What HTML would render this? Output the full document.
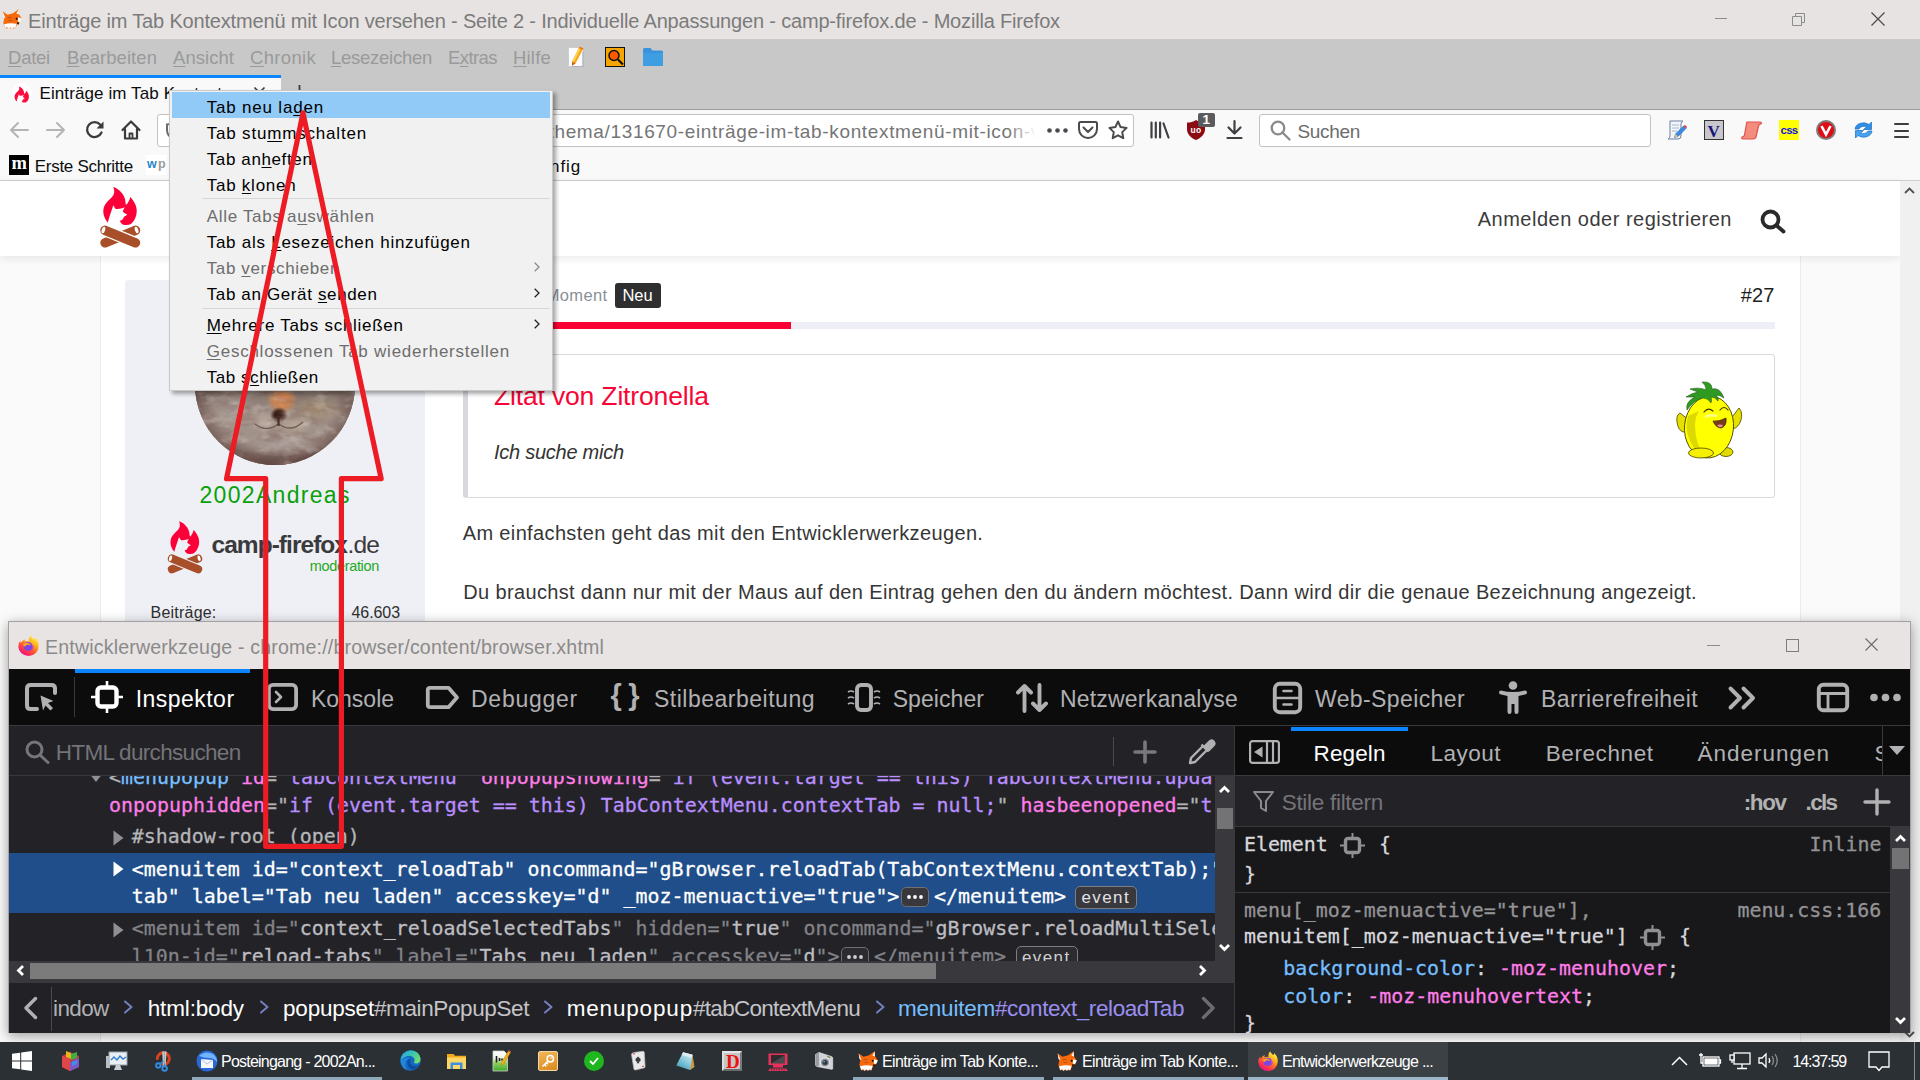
<!DOCTYPE html><html lang="de"><head><meta charset="utf-8"><title>Einträge im Tab Kontextmenü mit Icon versehen - Seite 2 - Individuelle Anpassungen - camp-firefox.de - Mozilla Firefox</title><style>
*{box-sizing:border-box;margin:0;padding:0}
html,body{width:1920px;height:1080px;overflow:hidden;background:#fafafa;font-family:"Liberation Sans",sans-serif}
.t{position:absolute;white-space:pre;display:block}
.a{position:absolute}
u{text-decoration:underline;text-underline-offset:2px;text-decoration-thickness:1px}
svg{position:absolute;overflow:visible}
</style></head><body>
<div class="a" style="left:0;top:0;width:1920px;height:39px;background:#e7e3e2"></div>
<svg style="left:2px;top:9px" width="20" height="20" viewBox="0 0 20 20"><path d="M.6 2.200L5.500 5.800 11 4.300 16.600.3 17.200 5.500 19.700 9.600 17.600 13.200 15.200 15.500 13.200 19.300H3.200L1.300 14 2.300 9z" fill="#f5690a"/><path d="M.6 2.200L3.600 9.200 1.500 8zM16.600.3L16.900 5.600 14.400 4.400z" fill="#fff"/><path d="M2 15.200q6-1.500 12.600-.4L13.200 19.600l-1.700-1.300-1.500 1.500-1.800-1.500-1.600 1.700-1.600-1.900L3.200 19.300z" fill="#fdfdfd"/><path d="M16 8.300L19.900 9.600 18 13.300 15.800 12.400z" fill="#fff"/><path d="M15.500 13q1.300.3 1.900 1l-1 1.800q-.9-.4-1.400-1.400z" fill="#2a150a"/><circle cx="14.700" cy="9.700" r="1" fill="#0c0c10"/><path d="M5.500 8.800q2-1.100 4.300.2M6.500 11q1.500.8 3.300.4" fill="none" stroke="#a84606" stroke-width=".8"/></svg>
<span class="t" style="left:28.00px;top:11.00px;font:normal 400 20.00px/1 'Liberation Sans', sans-serif;color:#7b7b7b;letter-spacing:-0.173px;">Einträge im Tab Kontextmenü mit Icon versehen - Seite 2 - Individuelle Anpassungen - camp-firefox.de - Mozilla Firefox</span>
<div class="a" style="left:1715px;top:18px;width:12px;height:1px;background:#8c8c8c"></div>
<svg style="left:1792px;top:13px" width="13" height="13" viewBox="0 0 13 13" fill="none" stroke="#8c8c8c" stroke-width="1"><path d="M0.5 3.5h9v9h-9z"/><path d="M3.5 3.5v-3h9v9h-3"/></svg>
<svg style="left:1871px;top:12px" width="14" height="14" viewBox="0 0 14 14" fill="none" stroke="#4a4a4a" stroke-width="1.2"><path d="M0.5 0.5l13 13M13.5 0.5l-13 13"/></svg>
<div class="a" style="left:0;top:39px;width:1920px;height:71px;background:#c8c8c8"></div>
<span class="t" style="left:8.00px;top:49.00px;font:normal 400 18.50px/1 'Liberation Sans', sans-serif;color:#9a9a9a;letter-spacing:-0.241px;"><u>D</u>atei</span>
<span class="t" style="left:67.00px;top:49.00px;font:normal 400 18.50px/1 'Liberation Sans', sans-serif;color:#9a9a9a;letter-spacing:0.050px;"><u>B</u>earbeiten</span>
<span class="t" style="left:173.00px;top:49.00px;font:normal 400 18.50px/1 'Liberation Sans', sans-serif;color:#9a9a9a;letter-spacing:0.047px;"><u>A</u>nsicht</span>
<span class="t" style="left:250.00px;top:49.00px;font:normal 400 18.50px/1 'Liberation Sans', sans-serif;color:#9a9a9a;letter-spacing:0.319px;"><u>C</u>hronik</span>
<span class="t" style="left:331.00px;top:49.00px;font:normal 400 18.50px/1 'Liberation Sans', sans-serif;color:#9a9a9a;letter-spacing:-0.263px;"><u>L</u>esezeichen</span>
<span class="t" style="left:448.00px;top:49.00px;font:normal 400 18.50px/1 'Liberation Sans', sans-serif;color:#9a9a9a;letter-spacing:-0.573px;">E<u>x</u>tras</span>
<span class="t" style="left:513.00px;top:49.00px;font:normal 400 18.50px/1 'Liberation Sans', sans-serif;color:#9a9a9a;letter-spacing:0.194px;"><u>H</u>ilfe</span>
<svg style="left:567px;top:46px" width="20" height="22" viewBox="0 0 20 22"><path d="M1.500 1.500h14.500v19H1.500z" fill="#fdfdff" stroke="#c4c6d4" stroke-width=".8"/><path d="M16 6v14.500H5" fill="none" stroke="#9ea2b8" stroke-width="1.200" opacity=".7"/><path d="M12.500.8l4 1.400-8 15.300-3.600 2.300.2-4.200z" fill="#f7a51d"/><path d="M12.500.8l1.800.6-7.700 15.500-1.500-1.300z" fill="#ffd24a"/><path d="M5.100 15.600l-.2 4.200 3.600-2.300z" fill="#c8651b"/><path d="M12.500.8l4 1.400-.8 1.600-4-1.500z" fill="#f0761b"/></svg>
<div class="a" style="left:605px;top:47px;width:20px;height:20px;background:#f7a600;border:1.5px solid #111"></div>
<svg style="left:605px;top:47px" width="20" height="20" viewBox="0 0 20 20"><circle cx="9" cy="8.5" r="5" fill="#ff5a00" stroke="#111" stroke-width="1.5"/><path d="M13 12.5l5 5" stroke="#111" stroke-width="2.2"/></svg>
<svg style="left:643px;top:48px" width="20" height="18" viewBox="0 0 20 18"><path d="M0 1.5q0-1.5 1.5-1.5h6l2 2.5h9q1.5 0 1.5 1.5v12.5q0 1.5-1.5 1.5h-17q-1.500 0-1.500-1.500z" fill="#3a93dc"/><path d="M0 5h20v11.500q0 1.500-1.500 1.500h-17q-1.500 0-1.500-1.500z" fill="#3f9de2"/></svg>
<div class="a" style="left:0;top:75px;width:281px;height:35px;background:#f9f9fa"></div>
<div class="a" style="left:0;top:75px;width:281px;height:3px;background:#0a84ff"></div>
<div class="a" style="left:11.500px;top:83px;width:20px;height:20px;border-radius:50%;background:#fff"></div>
<svg style="left:13.500px;top:85.500px" width="15.500" height="17" viewBox="12 4 36 40" preserveAspectRatio="none"><path d="M23.300 5C27 6 33 10 35 17c.5 2.500.5 4.500 1 6 2-2 3.500-4.500 4.300-8C44 19 47 24 46.700 29.500 46.500 35 44 40 40 42.500c-2 .5-4 .5-6.500.2L17.700 40.500C14 36 12.800 31 13.500 27c.7-5 5.500-9 8.500-12 2.500-2.500 3-6 1.300-10z" fill="#fb0e3e"/><path d="M17.500 41.500c1.500-5.500 3.500-11.500 5.800-18.200l2 3.400c2.700.6 5.700.3 9.400-1.400l-2 4c1.300 1.700 2.800 2.700 4.600 3.400L34 34.700c-.5 1.300-1 2.300-2 3.300l-2 .7c0 1.300 1 2.800 3.500 4.500l-16 .3z" fill="#fff"/></svg>
<span class="t" style="left:39.50px;top:85.00px;font:normal 400 17.00px/1 'Liberation Sans', sans-serif;color:#0c0c0d;width:214px;overflow:hidden;letter-spacing:.1px;">Einträge im Tab Kontextmenü mit</span>
<svg style="left:254px;top:87px" width="11" height="11" viewBox="0 0 11 11" stroke="#3d3d3d" stroke-width="1.6"><path d="M0.5 0.500l10 10M10.500 0.500l-10 10"/></svg>
<svg style="left:292px;top:85px" width="15" height="15" viewBox="0 0 15 15" stroke="#3d3d3d" stroke-width="1.800"><path d="M7.500 0v15M0 7.500h15"/></svg>
<div class="a" style="left:0;top:110px;width:1920px;height:71px;background:#f9f9fa"></div>
<div class="a" style="left:281px;top:109px;width:1639px;height:1px;background:#9e9e9e"></div>
<div class="a" style="left:0;top:180px;width:1920px;height:1px;background:#cfcfcf"></div>
<svg style="left:9px;top:120px" width="20" height="20" viewBox="0 0 20 20" fill="none" stroke="#b4b4b4" stroke-width="2" stroke-linecap="round" stroke-linejoin="round"><path d="M19 10H2M9 3l-7 7 7 7"/></svg>
<svg style="left:46px;top:120px" width="20" height="20" viewBox="0 0 20 20" fill="none" stroke="#b4b4b4" stroke-width="2" stroke-linecap="round" stroke-linejoin="round"><path d="M1 10h17M11 3l7 7-7 7"/></svg>
<svg style="left:85px;top:120px" width="20" height="20" viewBox="0 0 20 20" fill="none" stroke="#3b3b3c" stroke-width="2.300" stroke-linecap="round"><path d="M16.500 12.500A7.500 7.500 0 1 1 15.300 4.700"/><path d="M18.500 1.500v7h-7z" fill="#3b3b3c" stroke="none"/></svg>
<svg style="left:121px;top:120px" width="20" height="20" viewBox="0 0 20 20" fill="none" stroke="#3b3b3c" stroke-width="2.200" stroke-linejoin="round" stroke-linecap="round"><path d="M1.500 10L10 1.500 18.500 10"/><path d="M4 9v9.500h12V9"/><path d="M8.500 18v-4.500h3V18" stroke-width="1.800"/></svg>
<div class="a" style="left:157px;top:114px;width:977px;height:33px;background:#fff;border:1px solid #c2c2c4;border-radius:3px"></div>
<svg style="left:166px;top:121px" width="16" height="19" viewBox="0 0 16 19" fill="none" stroke="#6b6b6b" stroke-width="2"><path d="M8 1.200C5.500 3 3.500 3.500 1 3.500V9c0 4.500 3 7.500 7 9 4-1.500 7-4.500 7-9V3.500c-2.500 0-4.500-.5-7-2.300z"/></svg>
<span class="t" style="left:548.50px;top:122.00px;font:normal 400 19.00px/1 'Liberation Sans', sans-serif;color:#757575;letter-spacing:0.650px;">thema/131670-einträge-im-tab-kontextmenü-mit-icon-v</span>
<div class="a" style="left:1008px;top:116px;width:35px;height:29px;background:linear-gradient(90deg,rgba(255,255,255,0),#fff 80%)"></div>
<svg style="left:1047px;top:128px" width="21" height="5" viewBox="0 0 21 5" fill="#4a4a4f"><circle cx="2.500" cy="2.500" r="2.300"/><circle cx="10.500" cy="2.500" r="2.300"/><circle cx="18.500" cy="2.500" r="2.300"/></svg>
<svg style="left:1078px;top:121px" width="20" height="18" viewBox="0 0 20 18" fill="none" stroke="#4a4a4f" stroke-width="2" stroke-linecap="round" stroke-linejoin="round"><path d="M2.500 1h15q1.500 0 1.500 1.500V8a9 9 0 0 1-18 0V2.500Q1 1 2.500 1z"/><path d="M5.500 6.500L10 11l4.500-4.500"/></svg>
<svg style="left:1108px;top:120px" width="20" height="20" viewBox="0 0 20 20" fill="none" stroke="#4a4a4f" stroke-width="2" stroke-linejoin="round"><path d="M10 1.500l2.600 5.600 6 .8-4.400 4.200 1.100 6.100L10 15.300 4.700 18.200l1.100-6.100L1.400 7.900l6-.8z"/></svg>
<svg style="left:1150px;top:121px" width="20" height="18" viewBox="0 0 20 18" fill="none" stroke="#3f3f44" stroke-width="2.200" stroke-linecap="round"><path d="M1.500 1.500v15M5.800 1.500v15M10.100 1.500v15M13.500 2.500l5 14"/></svg>
<svg style="left:1187px;top:120px" width="18" height="20" viewBox="0 0 18 20"><path d="M9 0C6 2 3.500 2.500 0 2.500V9c0 5.500 4 9 9 11 5-2 9-5.500 9-11V2.500C14.500 2.500 12 2 9 0z" fill="#8c0a12"/></svg>
<span class="t" style="left:1190.50px;top:126.00px;font:normal 700 8.50px/1 'Liberation Sans', sans-serif;color:#fff;letter-spacing:0.305px;">uo</span>
<div class="a" style="left:1198px;top:113px;width:17px;height:14px;background:#5b5b5e;border-radius:2px"></div>
<span class="t" style="left:1202.50px;top:113.00px;font:normal 700 13.50px/1 'Liberation Sans', sans-serif;color:#fff;">1</span>
<svg style="left:1226px;top:120px" width="17" height="19" viewBox="0 0 17 19" fill="none" stroke="#3f3f44" stroke-width="2.200" stroke-linecap="round" stroke-linejoin="round"><path d="M8.500 1v12M2.500 7.500l6 6 6-6M1.500 18h14"/></svg>
<div class="a" style="left:1259px;top:114px;width:392px;height:33px;background:#fff;border:1px solid #c2c2c4;border-radius:3px"></div>
<svg style="left:1270px;top:120px" width="21" height="21" viewBox="0 0 21 21" fill="none" stroke="#8a8a8a" stroke-width="2.300" stroke-linecap="round"><circle cx="8" cy="8" r="6.300"/><path d="M12.500 12.500L19.500 19.500"/></svg>
<span class="t" style="left:1297.50px;top:122.00px;font:normal 400 19.00px/1 'Liberation Sans', sans-serif;color:#6c6c6c;letter-spacing:-0.326px;">Suchen</span>
<svg style="left:1666px;top:120px" width="21" height="20" viewBox="0 0 21 20"><path d="M4 1h13q-2 1-2 3v12q0 3-3 3H2q2-1 2-3z" fill="#f3f5fa" stroke="#6d7f9e" stroke-width="1"/><path d="M6 5h7M6 8h7M6 11h5" stroke="#aab4c8" stroke-width="1"/><path d="M17.500 6l2.500 2.500-8 8-3.500 1 1-3.500z" fill="#3b8be0" stroke="#1d5fb0" stroke-width=".6"/><path d="M17.500 6l2.500 2.500 1-1.500-2-2z" fill="#e8363a"/><path d="M8.500 17.500l1-3.500 2.500 2.500z" fill="#e9c078"/></svg>
<div class="a" style="left:1704px;top:120px;width:20px;height:20px;background:#c9c5cc;border:1.500px solid #333"></div>
<span class="t" style="left:1707.50px;top:123.00px;font:normal 700 17.00px/1 'Liberation Serif', serif;color:#151579;letter-spacing:0.719px;">V</span>
<svg style="left:1741px;top:121px" width="21" height="19" viewBox="0 0 21 19"><path d="M6 1h13q2 0 1 2-2 0-2.500 2L15 16q-.5 2-3 2H2q-2 0-1-2 2 0 2.500-2L5.500 3Q6 1 6 1z" fill="#f48c7e" stroke="#e0524a" stroke-width="1.200"/></svg>
<div class="a" style="left:1779px;top:120px;width:20px;height:20px;background:#ffff00"></div>
<span class="t" style="left:1780.50px;top:125.00px;font:normal 700 11.50px/1 'Liberation Sans', sans-serif;color:#1414e6;letter-spacing:-0.729px;">css</span>
<div class="a" style="left:1816px;top:120px;width:20px;height:20px;border-radius:50%;background:#e10b16;border:2px solid #7d7d7d"></div>
<svg style="left:1820px;top:125px" width="12" height="11" viewBox="0 0 12 11" fill="none" stroke="#fff" stroke-width="2.600"><path d="M1.500 1L6 9.500 10.500 1"/></svg>
<svg style="left:1853px;top:120px" width="21" height="20" viewBox="0 0 21 20"><path d="M2 9a8.500 7 0 0 1 14-4.500L18.500 2v7.500h-8l3-2.500A5 4 0 0 0 6 9z" fill="#2f8fe6" stroke="#1c6cc0" stroke-width=".7"/><path d="M19 11a8.500 7 0 0 1-14 4.500L2.500 18v-7.500h8l-3 2.500A5 4 0 0 0 15 11z" fill="#45a4f2" stroke="#1c6cc0" stroke-width=".7"/></svg>
<div class="a" style="left:1894px;top:122.5px;width:15px;height:2px;background:#3d3d3d;border-radius:1px"></div>
<div class="a" style="left:1894px;top:129.5px;width:15px;height:2px;background:#3d3d3d;border-radius:1px"></div>
<div class="a" style="left:1894px;top:136.0px;width:15px;height:2px;background:#3d3d3d;border-radius:1px"></div>
<div class="a" style="left:9px;top:155px;width:20px;height:20px;background:#000"></div>
<span class="t" style="left:11.50px;top:154.00px;font:normal 700 18.50px/1 'Liberation Serif', serif;color:#fff;">m</span>
<span class="t" style="left:34.70px;top:158.00px;font:normal 400 17.00px/1 'Liberation Sans', sans-serif;color:#0c0c0d;letter-spacing:-0.268px;">Erste Schritte</span>
<div class="a" style="left:146px;top:155px;width:20px;height:20px;background:#fff"></div>
<span class="t" style="left:147.00px;top:158.00px;font:normal 700 12.50px/1 'Liberation Sans', sans-serif;color:#2b87c8;">w</span>
<span class="t" style="left:158.00px;top:158.00px;font:normal 700 12.50px/1 'Liberation Sans', sans-serif;color:#9a9a9a;">p</span>
<span class="t" style="left:478.00px;top:158.00px;font:normal 400 17.00px/1 'Liberation Sans', sans-serif;color:#0c0c0d;letter-spacing:0.863px;">about:config</span>
<div class="a" style="left:0;top:181px;width:1900px;height:861px;background:#fafafa"></div>
<div class="a" style="left:100px;top:181px;width:1701px;height:861px;background:#fff;border-left:1px solid #ececef;border-right:1px solid #ececef"></div>
<div class="a" style="left:0;top:181px;width:1900px;height:75px;background:#fff;box-shadow:0 2px 9px rgba(0,0,0,.09)"></div>
<svg style="left:90.0px;top:182.0px" width="60.0" height="72.0" viewBox="0 0 60 72"><path d="M23.300 5C27 6 33 10 35 17c.5 2.500.5 4.500 1 6 2-2 3.500-4.500 4.300-8C44 19 47 24 46.700 29.500 46.500 35 44 40 40 42.500c-2 .5-4 .5-6.500.2L17.700 40.500C14 36 12.800 31 13.500 27c.7-5 5.500-9 8.500-12 2.500-2.500 3-6 1.300-10z" fill="#fb0039"/><path d="M17.500 41.500c1.500-5.500 3.500-11.500 5.800-18.200l2 3.400c2.700.6 5.700.3 9.400-1.400l-2 4c1.300 1.700 2.800 2.700 4.600 3.400L34 34.700c-.5 1.300-1 2.300-2 3.300l-2 .7c0 1.300 1 2.800 3.500 4.500l-16 .3z" fill="#fff"/><line x1="15" y1="60.800" x2="45.500" y2="48.300" stroke="#a84e28" stroke-width="9.500" stroke-linecap="round"/><line x1="13" y1="47.500" x2="47.500" y2="61.600" stroke="#fff" stroke-width="12"/><line x1="15" y1="48.300" x2="45.500" y2="60.800" stroke="#a84e28" stroke-width="9.500" stroke-linecap="round"/><ellipse cx="13.400" cy="48" rx="1.700" ry="3.300" fill="#fff" transform="rotate(18 13.400 48)"/><ellipse cx="46.600" cy="48" rx="1.700" ry="3.300" fill="#fff" transform="rotate(-18 46.600 48)"/></svg>
<span class="t" style="left:1477.70px;top:209.00px;font:normal 400 20.00px/1 'Liberation Sans', sans-serif;color:#3b3b3b;letter-spacing:0.502px;">Anmelden oder registrieren</span>
<svg style="left:1760px;top:209px" width="26" height="25" viewBox="0 0 26 25" fill="none" stroke="#2a2a2a" stroke-width="3.800" stroke-linecap="round"><circle cx="10.500" cy="10.500" r="8"/><path d="M16.500 16.500L23.500 22.500"/></svg>
<div class="a" style="left:1900px;top:181px;width:20px;height:861px;background:#f0f0f0"></div>
<svg style="left:1904px;top:1031px" width="11" height="7" viewBox="0 0 11 7" fill="none" stroke="#505050" stroke-width="1.800"><path d="M1 1l4.500 4.500L10 1"/></svg>
<svg style="left:1904px;top:187px" width="11" height="7" viewBox="0 0 11 7" fill="none" stroke="#505050" stroke-width="1.800"><path d="M1 6l4.500-4.500L10 6"/></svg>
<div class="a" style="left:125px;top:280px;width:300px;height:750px;background:#eef0f6;border-radius:3px"></div>
<div class="a" style="left:195px;top:305px;width:160px;height:160px;border-radius:50%;overflow:hidden;background:#85736d"><div class="a" style="left:0;top:0;width:160px;height:160px;background:radial-gradient(ellipse 9px 8px at 84px 110px,#2e1710 0,#3a1f15 50%,rgba(58,31,21,0) 100%),radial-gradient(ellipse 16px 14px at 87px 95px,#dd8d55 0,#cf8450 45%,rgba(207,132,80,0) 100%),radial-gradient(ellipse 17px 10px at 68px 117px,#bdaea4 0,rgba(189,174,164,0) 100%),radial-gradient(ellipse 19px 10px at 100px 120px,#b5a596 0,rgba(181,165,150,0) 100%),radial-gradient(ellipse 26px 14px at 122px 104px,#a08a6e 0,rgba(160,138,110,0) 100%),radial-gradient(ellipse 24px 16px at 36px 100px,#a29490 0,rgba(162,148,144,0) 100%),radial-gradient(ellipse 50px 13px at 86px 139px,#a99b96 0,rgba(169,155,150,0) 100%),radial-gradient(circle 80px at 80px 80px,rgba(0,0,0,0) 78%,rgba(60,30,25,.38) 100%),linear-gradient(180deg,#4a3a36 0,#75645d 50%,#a3948b 68%,#a09188 84%,#6e5952 100%)"></div><svg style="left:0;top:0" width="160" height="160" viewBox="0 0 160 160"><defs><filter id="furd" x="0" y="0" width="100%" height="100%"><feTurbulence type="fractalNoise" baseFrequency="0.045 0.11" numOctaves="3" seed="11"/><feColorMatrix type="matrix" values="0 0 0 0 0.230 0 0 0 0 0.130 0 0 0 0 0.110 2.400 0 0 0 -1.050"/></filter><filter id="furl" x="0" y="0" width="100%" height="100%"><feTurbulence type="fractalNoise" baseFrequency="0.060 0.100" numOctaves="3" seed="29"/><feColorMatrix type="matrix" values="0 0 0 0 0.800 0 0 0 0 0.740 0 0 0 0 0.690 0 2.400 0 0 -1.150"/></filter></defs><rect width="160" height="160" filter="url(#furd)" opacity=".5"/><rect width="160" height="160" filter="url(#furl)" opacity=".38"/><path d="M60 119q12 9 23 0M84 119q12 9 24-2" fill="none" stroke="#5a4038" stroke-width="1.500" opacity=".7"/><path d="M83.500 112v9" stroke="#3f2620" stroke-width="2.200" opacity=".85"/></svg></div>
<span class="t" style="left:199.50px;top:484.00px;font:normal 400 23.00px/1 'Liberation Sans', sans-serif;color:#0aa00a;letter-spacing:1.305px;">2002Andreas</span>
<svg style="left:159.4px;top:516.7px" width="51.6" height="61.9" viewBox="0 0 60 72"><path d="M23.300 5C27 6 33 10 35 17c.5 2.500.5 4.500 1 6 2-2 3.500-4.500 4.300-8C44 19 47 24 46.700 29.500 46.500 35 44 40 40 42.500c-2 .5-4 .5-6.500.2L17.700 40.500C14 36 12.800 31 13.500 27c.7-5 5.500-9 8.500-12 2.500-2.500 3-6 1.300-10z" fill="#fb0039"/><path d="M17.500 41.500c1.500-5.500 3.500-11.500 5.800-18.200l2 3.400c2.700.6 5.700.3 9.400-1.400l-2 4c1.300 1.700 2.800 2.700 4.600 3.400L34 34.700c-.5 1.300-1 2.300-2 3.300l-2 .7c0 1.300 1 2.800 3.500 4.500l-16 .3z" fill="#eef0f6"/><line x1="15" y1="60.800" x2="45.500" y2="48.300" stroke="#a84e28" stroke-width="9.500" stroke-linecap="round"/><line x1="13" y1="47.500" x2="47.500" y2="61.600" stroke="#eef0f6" stroke-width="12"/><line x1="15" y1="48.300" x2="45.500" y2="60.800" stroke="#a84e28" stroke-width="9.500" stroke-linecap="round"/><ellipse cx="13.400" cy="48" rx="1.700" ry="3.300" fill="#fff" transform="rotate(18 13.400 48)"/><ellipse cx="46.600" cy="48" rx="1.700" ry="3.300" fill="#fff" transform="rotate(-18 46.600 48)"/></svg>
<span class="t" style="left:211.50px;top:533.00px;font:normal 700 24.50px/1 'Liberation Sans', sans-serif;color:#3a3a3c;letter-spacing:-0.962px;">camp-firefox</span>
<span class="t" style="left:347.50px;top:533.00px;font:normal 400 24.50px/1 'Liberation Sans', sans-serif;color:#3a3a3c;letter-spacing:-0.854px;">.de</span>
<span class="t" style="left:309.70px;top:559.00px;font:normal 400 14.50px/1 'Liberation Sans', sans-serif;color:#1ea81e;letter-spacing:-0.325px;">moderation</span>
<span class="t" style="left:150.60px;top:605.00px;font:normal 400 16.00px/1 'Liberation Sans', sans-serif;color:#2e2e2e;letter-spacing:0.206px;">Beiträge:</span>
<span class="t" style="left:351.50px;top:605.00px;font:normal 400 16.00px/1 'Liberation Sans', sans-serif;color:#2e2e2e;letter-spacing:-0.073px;">46.603</span>
<span class="t" style="left:463.00px;top:287.00px;font:normal 400 16.50px/1 'Liberation Sans', sans-serif;color:#8a8f98;letter-spacing:0.376px;">Vor einem Moment</span>
<div class="a" style="left:615px;top:283px;width:46px;height:25px;background:#2f2f30;border-radius:3px"></div>
<span class="t" style="left:622.50px;top:287.00px;font:normal 400 16.50px/1 'Liberation Sans', sans-serif;color:#fff;letter-spacing:-0.094px;">Neu</span>
<span class="t" style="left:1740.75px;top:285.00px;font:normal 400 20.00px/1 'Liberation Sans', sans-serif;color:#1f1f1f;letter-spacing:0.125px;">#27</span>
<div class="a" style="left:463px;top:322px;width:1312px;height:7px;background:#eeeff6"></div>
<div class="a" style="left:463px;top:322px;width:328px;height:7px;background:#fb0034"></div>
<div class="a" style="left:463px;top:354px;width:1312px;height:144px;background:#fff;border:1px solid #dadadd;border-left:5px solid #d7d8de;border-radius:3px"></div>
<span class="t" style="left:494.00px;top:383.00px;font:normal 400 26.50px/1 'Liberation Sans', sans-serif;color:#f80537;letter-spacing:-0.162px;">Zitat von Zitronella</span>
<span class="t" style="left:494.00px;top:442.00px;font:italic 400 20.00px/1 'Liberation Sans', sans-serif;color:#333;letter-spacing:-0.260px;">Ich suche mich</span>
<svg style="left:1675px;top:380px" width="68" height="80" viewBox="0 0 68 80"><path d="M5 33q-4 2-3 9 1 8 6 10l8-2-2-10z" fill="#e6e000" stroke="#4a4400" stroke-width=".800"/><path d="M64 28q4 4 2 12-2 7-8 9l-4-8z" fill="#e6e000" stroke="#4a4400" stroke-width=".800"/><ellipse cx="51" cy="72" rx="7" ry="4.500" fill="#e0dc00" stroke="#4a4400" stroke-width=".800"/><ellipse cx="34" cy="47" rx="24.500" ry="31" fill="#ffff00" stroke="#4a4400" stroke-width=".900" transform="rotate(6 34 47)"/><path d="M13 36q-4 14 3 27 5 9 13 12-9-12-9-30 0-8 4-14z" fill="#d6d200" opacity=".850"/><ellipse cx="26" cy="73" rx="12.500" ry="5" fill="#f4f000" stroke="#4a4400" stroke-width=".800"/><path d="M12 30q-2-8 8-13l-9 0q6-4 12-5l-8-3q10-2 16 1 0-5-4-8 10-1 10 7 8-2 12 9-4-3-8-3 3 3 2 6-3-4-7-4 1 3 0 6-3-5-8-5-9 2-16 12z" fill="#2f9a22" stroke="#1c5a14" stroke-width=".600"/><path d="M29 32q4-5 9-1M45 30q4-5 8 0" fill="none" stroke="#3a3000" stroke-width="1.200" stroke-linecap="round"/><path d="M38 41q6 1 13-3 1 8-5 10-5 0-8-7z" fill="#7a3b1d" stroke="#3a2000" stroke-width=".700"/><path d="M42 45q3-1 6 0-1 3-4 2z" fill="#f08aa0"/><path d="M30 37q5-3 12-1" fill="none" stroke="#ffffb0" stroke-width="2.500" opacity=".8"/></svg>
<span class="t" style="left:462.70px;top:523.00px;font:normal 400 20.00px/1 'Liberation Sans', sans-serif;color:#363636;letter-spacing:0.363px;">Am einfachsten geht das mit den Entwicklerwerkzeugen.</span>
<span class="t" style="left:463.30px;top:582.00px;font:normal 400 20.00px/1 'Liberation Sans', sans-serif;color:#363636;letter-spacing:0.347px;">Du brauchst dann nur mit der Maus auf den Eintrag gehen den du ändern möchtest. Dann wird dir die genaue Bezeichnung angezeigt.</span>
<div class="a" style="left:169px;top:90px;width:384px;height:301px;background:#f1f1f1;border:1px solid #c9c9c9;box-shadow:3px 3px 4px rgba(0,0,0,.34)"></div>
<div class="a" style="left:172px;top:92px;width:378px;height:26px;background:#91c9f7"></div>
<span class="t" style="left:206.70px;top:99.00px;font:normal 400 17.00px/1 'Liberation Sans', sans-serif;color:#000;letter-spacing:0.804px;">Tab neu la<u>d</u>en</span>
<span class="t" style="left:206.70px;top:125.00px;font:normal 400 17.00px/1 'Liberation Sans', sans-serif;color:#000;letter-spacing:0.814px;">Tab stu<u>m</u>mschalten</span>
<span class="t" style="left:206.70px;top:151.00px;font:normal 400 17.00px/1 'Liberation Sans', sans-serif;color:#000;letter-spacing:0.623px;">Tab an<u>h</u>eften</span>
<span class="t" style="left:206.70px;top:177.00px;font:normal 400 17.00px/1 'Liberation Sans', sans-serif;color:#000;letter-spacing:0.755px;">Tab <u>k</u>lonen</span>
<span class="t" style="left:206.70px;top:208.00px;font:normal 400 17.00px/1 'Liberation Sans', sans-serif;color:#6d6d6d;letter-spacing:0.695px;">Alle Tabs a<u>u</u>swählen</span>
<span class="t" style="left:206.70px;top:234.00px;font:normal 400 17.00px/1 'Liberation Sans', sans-serif;color:#000;letter-spacing:0.736px;">Tab als <u>L</u>esezeichen hinzufügen</span>
<span class="t" style="left:206.70px;top:260.00px;font:normal 400 17.00px/1 'Liberation Sans', sans-serif;color:#6d6d6d;letter-spacing:0.633px;">Tab <u>v</u>erschieben</span>
<svg style="left:534px;top:261.8px" width="6" height="10" viewBox="0 0 6 10" fill="none" stroke="#8a8a8a" stroke-width="1.300"><path d="M0.700 0.700L5 5 0.700 9.300"/></svg>
<span class="t" style="left:206.70px;top:286.00px;font:normal 400 17.00px/1 'Liberation Sans', sans-serif;color:#000;letter-spacing:0.632px;">Tab an Gerät <u>s</u>enden</span>
<svg style="left:534px;top:287.8px" width="6" height="10" viewBox="0 0 6 10" fill="none" stroke="#222" stroke-width="1.300"><path d="M0.700 0.700L5 5 0.700 9.300"/></svg>
<span class="t" style="left:206.70px;top:317.00px;font:normal 400 17.00px/1 'Liberation Sans', sans-serif;color:#000;letter-spacing:0.724px;"><u>M</u>ehrere Tabs schließen</span>
<svg style="left:534px;top:318.8px" width="6" height="10" viewBox="0 0 6 10" fill="none" stroke="#222" stroke-width="1.300"><path d="M0.700 0.700L5 5 0.700 9.300"/></svg>
<span class="t" style="left:206.70px;top:343.00px;font:normal 400 17.00px/1 'Liberation Sans', sans-serif;color:#6d6d6d;letter-spacing:0.758px;"><u>G</u>eschlossenen Tab wiederherstellen</span>
<span class="t" style="left:206.70px;top:369.00px;font:normal 400 17.00px/1 'Liberation Sans', sans-serif;color:#000;letter-spacing:0.550px;">Tab s<u>c</u>hließen</span>
<div class="a" style="left:202px;top:198px;width:348px;height:1px;background:#d7d7d7"></div>
<div class="a" style="left:202px;top:308px;width:348px;height:1px;background:#d7d7d7"></div>
<div class="a" style="left:8px;top:621px;width:1903px;height:412px;background:#232327;box-shadow:0 3px 12px rgba(0,0,0,.38);border:1px solid #a3a1a1"></div>
<div class="a" style="left:9px;top:622px;width:1901px;height:47px;background:#e8e4e3"></div>
<svg style="left:17.5px;top:635.0px" width="21" height="21" viewBox="0 0 21 21"><defs><linearGradient id="fg1" x1=".820" y1=".080" x2=".250" y2=".950"><stop offset="0" stop-color="#fff44f"/><stop offset=".300" stop-color="#ffb11f"/><stop offset=".550" stop-color="#ff6a2a"/><stop offset=".800" stop-color="#ff3150"/><stop offset="1" stop-color="#e31587"/></linearGradient></defs><path d="M12.800.3q.8 2.600 3.300 4.200.9-1 .7-2.400 4.200 3.600 3.900 9a10.200 9.700 0 0 1-20.400.4q0-3.500 2-6-.2 1.500.5 2.600Q4.300 5 7.300 4.200q-.8 1.100-.5 2.400 2.500-1 4.500-.2Q9.800 3.600 12.800.3z" fill="url(#fg1)"/><circle cx="10" cy="11.400" r="4.300" fill="#7a45e8"/><path d="M12 8.500q2.300 1.800 1.800 4.800-.8 2.400-3.300 2.500 3.500.8 5-2.600.8-3-3.500-4.700z" fill="#b13ad8" opacity=".7"/><path d="M4.800 9.800q2.400-2.900 5.700-1.700 1.900.9 2.300 2.600-2-1.200-4.100-.8-1.400.4-1.100 1.600-1.700.3-2.800-1.700z" fill="#ffa01f"/></svg>
<span class="t" style="left:45.00px;top:638.00px;font:normal 400 19.60px/1 'Liberation Sans', sans-serif;color:#8b8a8a;letter-spacing:0.170px;">Entwicklerwerkzeuge - chrome://browser/content/browser.xhtml</span>
<div class="a" style="left:1707px;top:645px;width:13px;height:1px;background:#8c8c8c"></div>
<div class="a" style="left:1786px;top:639px;width:13px;height:13px;border:1px solid #7d7d7d"></div>
<svg style="left:1865px;top:638px" width="13" height="13" viewBox="0 0 13 13" fill="none" stroke="#6a6a6a" stroke-width="1.100"><path d="M0.500 0.500l12 12M12.500 0.500l-12 12"/></svg>
<div class="a" style="left:9px;top:669px;width:1901px;height:57px;background:#0c0c0d;border-bottom:1px solid #38383d"></div>
<div class="a" style="left:75px;top:669px;width:175px;height:4px;background:#0a84ff"></div>
<div class="a" style="left:74px;top:677px;width:1px;height:40px;background:#38383d"></div>
<svg style="left:25px;top:683px" width="32" height="29" viewBox="0 0 32 29" fill="none" stroke="#b1b1b3" stroke-width="4" stroke-linejoin="round" stroke-linecap="round"><path d="M12 26H5.500Q2 26 2 22.500V5.500Q2 2 5.500 2h21Q30 2 30 5.500V10"/><path d="M15.500 12.500l13 5.500-5.500 2 5 5-2.500 2.500-5-5-2.500 5z" fill="#b1b1b3" stroke="none"/></svg>
<svg style="left:91px;top:681px" width="32" height="32" viewBox="0 0 32 32" fill="none" stroke="#fff" stroke-width="4.400"><rect x="6.500" y="6.500" width="19" height="19" rx="3.500"/><path d="M16 0v7M16 25v7M0 16h7M25 16h7" stroke-width="2.600"/></svg>
<span class="t" style="left:135.75px;top:688.00px;font:normal 400 23.00px/1 'Liberation Sans', sans-serif;color:#fff;letter-spacing:0.460px;">Inspektor</span>
<svg style="left:267px;top:683px" width="31" height="28" viewBox="0 0 31 28" fill="none" stroke="#b1b1b3" stroke-width="3.800" stroke-linejoin="round" stroke-linecap="round"><rect x="1.900" y="1.900" width="27.200" height="24.200" rx="4"/><path d="M9 9l5 5-5 5" stroke-width="2.600"/></svg>
<span class="t" style="left:311.00px;top:688.00px;font:normal 400 23.00px/1 'Liberation Sans', sans-serif;color:#b1b1b3;letter-spacing:-0.018px;">Konsole</span>
<svg style="left:426px;top:686px" width="33" height="23" viewBox="0 0 33 23" fill="none" stroke="#b1b1b3" stroke-width="3.800" stroke-linejoin="round"><path d="M4 1.800h18.500L31 11.500 22.500 21.200H4Q1.800 21.200 1.800 19V4Q1.800 1.800 4 1.800z"/></svg>
<span class="t" style="left:471.00px;top:688.00px;font:normal 400 23.00px/1 'Liberation Sans', sans-serif;color:#b1b1b3;letter-spacing:0.746px;">Debugger</span>
<span class="t" style="left:610.50px;top:681.00px;font:normal 700 29.00px/1 'Liberation Sans', sans-serif;color:#b1b1b3;letter-spacing:6.5px;">{}</span>
<span class="t" style="left:654.00px;top:688.00px;font:normal 400 23.00px/1 'Liberation Sans', sans-serif;color:#b1b1b3;letter-spacing:0.503px;">Stilbearbeitung</span>
<svg style="left:847px;top:683px" width="34" height="29" viewBox="0 0 34 29" fill="none" stroke="#b1b1b3" stroke-width="3.900"><rect x="10" y="2" width="14" height="25" rx="4"/><path d="M1 9q3-2 6 0M1 15q3-2 6 0M1 21q3-2 6 0M27 9q3-2 6 0M27 15q3-2 6 0M27 21q3-2 6 0" stroke-width="1.700"/></svg>
<span class="t" style="left:892.70px;top:688.00px;font:normal 400 23.00px/1 'Liberation Sans', sans-serif;color:#b1b1b3;letter-spacing:0.065px;">Speicher</span>
<svg style="left:1016px;top:683px" width="32" height="30" viewBox="0 0 32 30" fill="none" stroke="#b1b1b3" stroke-width="3.900" stroke-linecap="round" stroke-linejoin="round"><path d="M8.500 28V3M2 9.500L8.500 3l6.500 6.500M23.500 2v25M17 20.500l6.500 6.500 6.500-6.500"/></svg>
<span class="t" style="left:1060.00px;top:688.00px;font:normal 400 23.00px/1 'Liberation Sans', sans-serif;color:#b1b1b3;letter-spacing:0.191px;">Netzwerkanalyse</span>
<svg style="left:1273px;top:682px" width="29" height="32" viewBox="0 0 29 32" fill="none" stroke="#b1b1b3" stroke-width="3.900" stroke-linecap="round"><rect x="1.800" y="1.800" width="25.400" height="28.400" rx="5"/><path d="M2 16h25M10.500 9h8M10.500 22.500h8" stroke-width="2.600"/></svg>
<span class="t" style="left:1315.00px;top:688.00px;font:normal 400 23.00px/1 'Liberation Sans', sans-serif;color:#b1b1b3;letter-spacing:0.391px;">Web-Speicher</span>
<svg style="left:1499px;top:681px" width="28" height="33" viewBox="0 0 28 33" fill="#b1b1b3"><circle cx="14" cy="4.500" r="4.300"/><path d="M2 9.500q-2 0-2 2t2 2l6.500 1.500V31q0 2 2 2t2-2v-8h3v8q0 2 2 2t2-2V15L26 13.500q2 0 2-2t-2-2q-6 1.500-12 1.500T2 9.500z"/></svg>
<span class="t" style="left:1541.00px;top:688.00px;font:normal 400 23.00px/1 'Liberation Sans', sans-serif;color:#b1b1b3;letter-spacing:0.385px;">Barrierefreiheit</span>
<svg style="left:1728px;top:686px" width="28" height="24" viewBox="0 0 28 24" fill="none" stroke="#b1b1b3" stroke-width="3.900" stroke-linecap="round" stroke-linejoin="round"><path d="M2.500 2.500L12 12 2.500 21.500M15.500 2.500L25 12 15.500 21.500"/></svg>
<svg style="left:1817px;top:683px" width="32" height="29" viewBox="0 0 32 29" fill="none" stroke="#b1b1b3" stroke-width="3.900"><rect x="1.800" y="1.800" width="28.400" height="25.400" rx="4.500"/><path d="M2 10.500h28M11 10.500V27" stroke-width="2.800"/></svg>
<svg style="left:1870px;top:693px" width="31" height="9" viewBox="0 0 31 9" fill="#b1b1b3"><circle cx="4" cy="4.500" r="3.800"/><circle cx="15.500" cy="4.500" r="3.800"/><circle cx="27" cy="4.500" r="3.800"/></svg>
<div class="a" style="left:9px;top:726px;width:1225px;height:50px;background:#232327;border-bottom:1px solid #38383d"></div>
<svg style="left:25px;top:740px" width="25" height="24" viewBox="0 0 25 24" fill="none" stroke="#75757a" stroke-width="3" stroke-linecap="round"><circle cx="9.500" cy="9.500" r="7.500"/><path d="M15 15l8 7.500"/></svg>
<span class="t" style="left:55.75px;top:742.00px;font:normal 400 22.50px/1 'Liberation Sans', sans-serif;color:#737378;letter-spacing:-0.673px;">HTML durchsuchen</span>
<div class="a" style="left:1113px;top:737px;width:1px;height:29px;background:#4a4a4f"></div>
<svg style="left:1133px;top:740px" width="24" height="24" viewBox="0 0 24 24" fill="none" stroke="#77777c" stroke-width="3.600" stroke-linecap="round"><path d="M12 2v20M2 12h20"/></svg>
<svg style="left:1187px;top:738px" width="28" height="28" viewBox="0 0 28 28" fill="none" stroke="#b1b1b3" stroke-width="2.400" stroke-linejoin="round"><path d="M3 25l1-5L16 8l4 4L8 24z"/><path d="M14.500 6.500l7 7M17 9l5-5q2.500-2.500 4.500-.5t-.5 4.500l-5 5" fill="#b1b1b3"/></svg>
<div class="a" style="left:9px;top:776px;width:1206px;height:185px;overflow:hidden;background:#232327">
<span class="t" style="left:100.00px;top:-8.00px;font:19.93px/1 'DejaVu Sans Mono', 'Liberation Mono', monospace;-webkit-text-stroke:.3px;"><span style="color:#b1b1b3">&lt;</span><span style="color:#75bfff">menupopup</span><span style="color:#b1b1b3"> </span><span style="color:#ff7de9">id</span><span style="color:#b1b1b3">="</span><span style="color:#b98eff">tabContextMenu</span><span style="color:#b1b1b3">" </span><span style="color:#ff7de9">onpopupshowing</span><span style="color:#b1b1b3">="</span><span style="color:#b98eff">if (event.target == this) TabContextMenu.updateContextMenu(this);</span><span style="color:#b1b1b3">"</span></span>
<svg style="left:80px;top:-3px" width="14" height="10" viewBox="0 0 14 10"><path d="M0 0h14L7 9z" fill="#8f8f94"/></svg>
<span class="t" style="left:100.00px;top:20.00px;font:19.93px/1 'DejaVu Sans Mono', 'Liberation Mono', monospace;-webkit-text-stroke:.3px;"><span style="color:#ff7de9">onpopuphidden</span><span style="color:#b1b1b3">="</span><span style="color:#b98eff">if (event.target == this) TabContextMenu.contextTab = null;</span><span style="color:#b1b1b3">" </span><span style="color:#ff7de9">hasbeenopened</span><span style="color:#b1b1b3">="</span><span style="color:#b98eff">true</span><span style="color:#b1b1b3">"&gt;</span></span>
<svg style="left:103.5px;top:53.5px" width="11" height="16" viewBox="0 0 11 16"><path d="M0.500 0.500L10.500 8 0.500 15.500z" fill="#8f8f94"/></svg>
<span class="t" style="left:122.75px;top:51.00px;font:19.93px/1 'DejaVu Sans Mono', 'Liberation Mono', monospace;-webkit-text-stroke:.3px;"><span style="color:#b6b6ba">#shadow-root (open)</span></span>
<div class="a" style="left:0;top:77px;width:1206px;height:60px;background:#204e8a"></div>
<svg style="left:103.5px;top:85.0px" width="11" height="16" viewBox="0 0 11 16"><path d="M0.500 0.500L10.500 8 0.500 15.500z" fill="#fff"/></svg>
<span class="t" style="left:122.75px;top:84.00px;font:19.93px/1 'DejaVu Sans Mono', 'Liberation Mono', monospace;-webkit-text-stroke:.3px;"><span style="color:#fff">&lt;menuitem id="context_reloadTab" oncommand="gBrowser.reloadTab(TabContextMenu.contextTab);" </span></span>
<span class="t" style="left:122.75px;top:111.00px;font:19.93px/1 'DejaVu Sans Mono', 'Liberation Mono', monospace;-webkit-text-stroke:.3px;"><span style="color:#fff">tab" label="Tab neu laden" accesskey="d" _moz-menuactive="true"&gt;</span></span>
<div class="a" style="left:892px;top:111px;width:28px;height:20px;border:1.500px solid #6f6f74;border-radius:5px;background:#38383d"></div>
<svg style="left:898px;top:119px" width="16" height="4" viewBox="0 0 16 4" fill="#fff"><circle cx="2" cy="2" r="1.900"/><circle cx="8" cy="2" r="1.900"/><circle cx="14" cy="2" r="1.900"/></svg>
<span class="t" style="left:925.00px;top:111.00px;font:19.93px/1 'DejaVu Sans Mono', 'Liberation Mono', monospace;-webkit-text-stroke:.3px;"><span style="color:#fff">&lt;/menuitem&gt;</span></span>
<div class="a" style="left:1066px;top:109.500px;width:62px;height:23px;border:1.500px solid #7d7d82;border-radius:5px;background:#38383d"></div>
<span class="t" style="left:1072.40px;top:113.00px;font:normal 400 17.00px/1 'Liberation Sans', sans-serif;color:#e2e2e6;letter-spacing:1.441px;">event</span>
<svg style="left:103.5px;top:145.5px" width="11" height="16" viewBox="0 0 11 16"><path d="M0.500 0.500L10.500 8 0.500 15.500z" fill="#8f8f94"/></svg>
<span class="t" style="left:122.75px;top:143.00px;font:19.93px/1 'DejaVu Sans Mono', 'Liberation Mono', monospace;-webkit-text-stroke:.3px;"><span style="color:#828287">&lt;menuitem </span><span style="color:#828287">id="</span><span style="color:#bdbdc2">context_reloadSelectedTabs</span><span style="color:#828287">" hidden="</span><span style="color:#bdbdc2">true</span><span style="color:#828287">" oncommand="</span><span style="color:#bdbdc2">gBrowser.reloadMultiSelectedTabs();</span><span style="color:#828287">"</span></span>
<span class="t" style="left:122.75px;top:171.00px;font:19.93px/1 'DejaVu Sans Mono', 'Liberation Mono', monospace;-webkit-text-stroke:.3px;"><span style="color:#828287">l10n-id="</span><span style="color:#bdbdc2">reload-tabs</span><span style="color:#828287">" label="</span><span style="color:#bdbdc2">Tabs neu laden</span><span style="color:#828287">" accesskey="</span><span style="color:#bdbdc2">d</span><span style="color:#828287">"&gt;</span></span>
<div class="a" style="left:832px;top:171px;width:28px;height:20px;border:1.500px solid #6f6f74;border-radius:5px;background:#2c2c30"></div>
<svg style="left:838px;top:179px" width="16" height="4" viewBox="0 0 16 4" fill="#d0d0d4"><circle cx="2" cy="2" r="1.900"/><circle cx="8" cy="2" r="1.900"/><circle cx="14" cy="2" r="1.900"/></svg>
<span class="t" style="left:865.00px;top:171.00px;font:19.93px/1 'DejaVu Sans Mono', 'Liberation Mono', monospace;-webkit-text-stroke:.3px;"><span style="color:#828287">&lt;/menuitem&gt;</span></span>
<div class="a" style="left:1006.500px;top:169.500px;width:62px;height:23px;border:1.500px solid #7d7d82;border-radius:5px;background:#2c2c30"></div>
<span class="t" style="left:1013.00px;top:173.00px;font:normal 400 17.00px/1 'Liberation Sans', sans-serif;color:#d0d0d4;letter-spacing:1.381px;">event</span>
</div>
<div class="a" style="left:1215px;top:776px;width:19px;height:185px;background:#38383d"></div>
<svg style="left:1219px;top:785px" width="11" height="8" viewBox="0 0 11 8" fill="none" stroke="#fff" stroke-width="2.800"><path d="M1 7l4.500-4.500L10 7"/></svg>
<div class="a" style="left:1216.500px;top:808px;width:16px;height:21px;background:#737376"></div>
<svg style="left:1219px;top:944px" width="11" height="8" viewBox="0 0 11 8" fill="none" stroke="#fff" stroke-width="2.800"><path d="M1 1l4.500 4.500L10 1"/></svg>
<div class="a" style="left:9px;top:961px;width:1225px;height:22px;background:#38383d"></div>
<div class="a" style="left:30px;top:963px;width:906px;height:16px;background:#7b7b7b"></div>
<svg style="left:16px;top:965px" width="8" height="11" viewBox="0 0 8 11" fill="none" stroke="#fff" stroke-width="2.800"><path d="M7 1L2.500 5.500 7 10"/></svg>
<svg style="left:1199px;top:965px" width="8" height="11" viewBox="0 0 8 11" fill="none" stroke="#fff" stroke-width="2.800"><path d="M1 1l4.500 4.500L1 10"/></svg>
<div class="a" style="left:9px;top:983px;width:1225px;height:50px;background:#222226"></div>
<svg style="left:23px;top:996px" width="15" height="24" viewBox="0 0 15 24" fill="none" stroke="#b1b1b3" stroke-width="3.400" stroke-linecap="round" stroke-linejoin="round"><path d="M12.500 2.500L3 12l9.500 9.500"/></svg>
<div class="a" style="left:51px;top:987px;width:1px;height:44px;background:#4a4a4f"></div>
<span class="t" style="left:53.00px;top:998.00px;font:normal 400 22.50px/1 'Liberation Sans', sans-serif;color:#b1b1b3;letter-spacing:-0.619px;">indow</span>
<svg style="left:123.0px;top:999.500px" width="10" height="14" viewBox="0 0 10 14" fill="none" stroke="#7580c0" stroke-width="2" stroke-linecap="round" stroke-linejoin="round"><path d="M2 1.500l6.500 5.500-6.500 5.500"/></svg>
<span class="t" style="left:147.70px;top:998.00px;font:normal 400 22.50px/1 'Liberation Sans', sans-serif;color:#fff;letter-spacing:-0.140px;">html:body</span>
<svg style="left:259.0px;top:999.500px" width="10" height="14" viewBox="0 0 10 14" fill="none" stroke="#7580c0" stroke-width="2" stroke-linecap="round" stroke-linejoin="round"><path d="M2 1.500l6.500 5.500-6.500 5.500"/></svg>
<span class="t" style="left:283.00px;top:998.00px;font:normal 400 22.50px/1 'Liberation Sans', sans-serif;color:#fff;letter-spacing:-0.199px;">popupset</span>
<span class="t" style="left:374.00px;top:998.00px;font:normal 400 22.50px/1 'Liberation Sans', sans-serif;color:#c4c4c8;letter-spacing:-0.394px;">#mainPopupSet</span>
<svg style="left:543.0px;top:999.500px" width="10" height="14" viewBox="0 0 10 14" fill="none" stroke="#7580c0" stroke-width="2" stroke-linecap="round" stroke-linejoin="round"><path d="M2 1.500l6.500 5.500-6.500 5.500"/></svg>
<span class="t" style="left:566.70px;top:998.00px;font:normal 400 22.50px/1 'Liberation Sans', sans-serif;color:#fff;letter-spacing:0.827px;">menupopup</span>
<span class="t" style="left:693.00px;top:998.00px;font:normal 400 22.50px/1 'Liberation Sans', sans-serif;color:#c4c4c8;letter-spacing:-0.708px;">#tabContextMenu</span>
<svg style="left:875.0px;top:999.500px" width="10" height="14" viewBox="0 0 10 14" fill="none" stroke="#7580c0" stroke-width="2" stroke-linecap="round" stroke-linejoin="round"><path d="M2 1.500l6.500 5.500-6.500 5.500"/></svg>
<span class="t" style="left:898.00px;top:998.00px;font:normal 400 22.50px/1 'Liberation Sans', sans-serif;color:#75bfff;letter-spacing:-0.225px;">menuitem</span>
<span class="t" style="left:995.00px;top:998.00px;font:normal 400 22.50px/1 'Liberation Sans', sans-serif;color:#9a8ff0;letter-spacing:-0.411px;">#context_reloadTab</span>
<svg style="left:1201px;top:996px" width="15" height="24" viewBox="0 0 15 24" fill="none" stroke="#6c6c70" stroke-width="3.400" stroke-linecap="round" stroke-linejoin="round"><path d="M2.500 2.500L12 12l-9.500 9.500"/></svg>
<div class="a" style="left:1234px;top:726px;width:1px;height:307px;background:#38383d"></div>
<div class="a" style="left:1235px;top:726px;width:675px;height:50px;background:#0c0c0d;border-bottom:1px solid #38383d"></div>
<div class="a" style="left:1291px;top:727px;width:117px;height:4px;background:#0a84ff"></div>
<svg style="left:1248.500px;top:739.500px" width="31" height="24" viewBox="0 0 31 24" fill="none" stroke="#b1b1b3" stroke-width="2.200"><rect x="1.100" y="1.100" width="28.800" height="21.800" rx="2.500"/><path d="M18 1v22M24 1v22"/><path d="M13.500 6.500v11L5 12z" fill="#b1b1b3" stroke="none"/></svg>
<span class="t" style="left:1313.60px;top:743.00px;font:normal 400 22.50px/1 'Liberation Sans', sans-serif;color:#fff;letter-spacing:0.115px;">Regeln</span>
<span class="t" style="left:1430.60px;top:743.00px;font:normal 400 22.50px/1 'Liberation Sans', sans-serif;color:#b1b1b3;letter-spacing:0.473px;">Layout</span>
<span class="t" style="left:1545.70px;top:743.00px;font:normal 400 22.50px/1 'Liberation Sans', sans-serif;color:#b1b1b3;letter-spacing:0.602px;">Berechnet</span>
<span class="t" style="left:1697.60px;top:743.00px;font:normal 400 22.50px/1 'Liberation Sans', sans-serif;color:#b1b1b3;letter-spacing:0.979px;">Änderungen</span>
<span class="t" style="left:1874.50px;top:743.00px;font:normal 400 22.50px/1 'Liberation Sans', sans-serif;color:#b1b1b3;width:8px;overflow:hidden;">Schriftarten</span>
<div class="a" style="left:1882px;top:726px;width:1px;height:49px;background:#38383d"></div>
<svg style="left:1889px;top:746px" width="16" height="9" viewBox="0 0 16 9"><path d="M0 0h16L8 9z" fill="#b1b1b3"/></svg>
<div class="a" style="left:1235px;top:776px;width:675px;height:51px;background:#232327;border-bottom:1px solid #38383d"></div>
<svg style="left:1253px;top:791px" width="21" height="22" viewBox="0 0 21 22" fill="none" stroke="#8a8a8f" stroke-width="2" stroke-linejoin="round"><path d="M1 1h19l-7 9v10l-5-3v-7z"/></svg>
<span class="t" style="left:1281.70px;top:792.00px;font:normal 400 22.50px/1 'Liberation Sans', sans-serif;color:#737378;letter-spacing:-0.288px;">Stile filtern</span>
<span class="t" style="left:1743.70px;top:792.00px;font:normal 700 22.50px/1 'Liberation Sans', sans-serif;color:#b1b1b3;letter-spacing:-1.375px;">:hov</span>
<span class="t" style="left:1805.60px;top:792.00px;font:normal 700 22.50px/1 'Liberation Sans', sans-serif;color:#b1b1b3;letter-spacing:-1.708px;">.cls</span>
<svg style="left:1865px;top:790px" width="24" height="24" viewBox="0 0 24 24" fill="none" stroke="#b1b1b3" stroke-width="3.400" stroke-linecap="round"><path d="M12 0v24M0 12h24"/></svg>
<div class="a" style="left:1235px;top:827px;width:655px;height:206px;background:#18181a"></div>
<div class="a" style="left:1235px;top:892px;width:655px;height:1px;background:#38383d"></div>
<span class="t" style="left:1243.90px;top:835.00px;font:19.93px/1 'DejaVu Sans Mono', 'Liberation Mono', monospace;-webkit-text-stroke:.3px;"><span style="color:#d7d7db">Element</span></span>
<svg style="left:1339.5px;top:833.0px" width="25" height="25" viewBox="0 0 25 25" fill="none" stroke="#8f8f94" stroke-width="3.400"><rect x="5.500" y="5.500" width="14" height="14" rx="2.500"/><path d="M12.500 0v5.500M12.500 19.500V25M0 12.500h5.500M19.500 12.500H25" stroke-width="2"/></svg>
<span class="t" style="left:1379.00px;top:835.00px;font:19.93px/1 'DejaVu Sans Mono', 'Liberation Mono', monospace;-webkit-text-stroke:.3px;"><span style="color:#d7d7db">{</span></span>
<span class="t" style="left:1809.60px;top:835.00px;font:19.93px/1 'DejaVu Sans Mono', 'Liberation Mono', monospace;-webkit-text-stroke:.3px;"><span style="color:#939395">Inline</span></span>
<span class="t" style="left:1243.90px;top:865.00px;font:19.93px/1 'DejaVu Sans Mono', 'Liberation Mono', monospace;-webkit-text-stroke:.3px;"><span style="color:#d7d7db">}</span></span>
<span class="t" style="left:1243.90px;top:901.00px;font:19.93px/1 'DejaVu Sans Mono', 'Liberation Mono', monospace;-webkit-text-stroke:.3px;"><span style="color:#939395">menu[_moz-menuactive="true"],</span></span>
<span class="t" style="left:1737.40px;top:901.00px;font:19.93px/1 'DejaVu Sans Mono', 'Liberation Mono', monospace;-webkit-text-stroke:.3px;"><span style="color:#939395">menu.css:166</span></span>
<span class="t" style="left:1243.90px;top:927.00px;font:19.93px/1 'DejaVu Sans Mono', 'Liberation Mono', monospace;-webkit-text-stroke:.3px;"><span style="color:#d7d7db">menuitem[_moz-menuactive="true"]</span></span>
<svg style="left:1639.5px;top:924.5px" width="25" height="25" viewBox="0 0 25 25" fill="none" stroke="#8f8f94" stroke-width="3.400"><rect x="5.500" y="5.500" width="14" height="14" rx="2.500"/><path d="M12.500 0v5.500M12.500 19.500V25M0 12.500h5.500M19.500 12.500H25" stroke-width="2"/></svg>
<span class="t" style="left:1679.00px;top:927.00px;font:19.93px/1 'DejaVu Sans Mono', 'Liberation Mono', monospace;-webkit-text-stroke:.3px;"><span style="color:#d7d7db">{</span></span>
<span class="t" style="left:1283.20px;top:959.00px;font:19.93px/1 'DejaVu Sans Mono', 'Liberation Mono', monospace;-webkit-text-stroke:.3px;"><span style="color:#75bfff">background-color</span><span style="color:#d7d7db">: </span><span style="color:#ff7de9">-moz-menuhover</span><span style="color:#d7d7db">;</span></span>
<span class="t" style="left:1283.20px;top:987.00px;font:19.93px/1 'DejaVu Sans Mono', 'Liberation Mono', monospace;-webkit-text-stroke:.3px;"><span style="color:#75bfff">color</span><span style="color:#d7d7db">: </span><span style="color:#ff7de9">-moz-menuhovertext</span><span style="color:#d7d7db">;</span></span>
<span class="t" style="left:1243.90px;top:1014.00px;font:19.93px/1 'DejaVu Sans Mono', 'Liberation Mono', monospace;-webkit-text-stroke:.3px;height:22px;overflow:hidden;"><span style="color:#d7d7db">}</span></span>
<div class="a" style="left:1890px;top:827px;width:20px;height:206px;background:#38383d"></div>
<svg style="left:1894.500px;top:834px" width="11" height="8" viewBox="0 0 11 8" fill="none" stroke="#fff" stroke-width="2.800"><path d="M1 7l4.500-4.500L10 7"/></svg>
<div class="a" style="left:1892px;top:848px;width:17px;height:21px;background:#737376"></div>
<svg style="left:1894.500px;top:1017px" width="11" height="8" viewBox="0 0 11 8" fill="none" stroke="#fff" stroke-width="2.800"><path d="M1 1l4.500 4.500L10 1"/></svg>
<svg style="left:0;top:0" width="1920" height="1080" viewBox="0 0 1920 1080" fill="none"><path d="M265.700 846.300V478.700H226.500L303 113l78.200 365.700H341.400V846.300z" stroke="#ed1c24" stroke-width="5.200" stroke-linejoin="round"/></svg>
<div class="a" style="left:0;top:1042px;width:1920px;height:38px;background:#2b3035"></div>
<svg style="left:12px;top:1051px" width="20" height="20" viewBox="0 0 20 20" fill="#fff"><path d="M0 2.800L8.200 1.700v7.800H0zM9.200 1.500L20 0v9.500H9.200zM0 10.500h8.200v7.800L0 17.200zM9.200 10.500H20V20L9.200 18.500z"/></svg>
<svg style="left:60px;top:1050px" width="21" height="22" viewBox="0 0 21 22"><path d="M2 6l8-4 9 4v11l-9 4-8-4z" fill="#c43b3b"/><path d="M2 6l8 3v12l-8-4z" fill="#e04848"/><path d="M6 1l5 2v6L6 7z" fill="#e8b418"/><path d="M11 4l6-2v6l-6 2z" fill="#3fae49"/><path d="M10 12l9-4v9l-9 4z" fill="#7b57c9"/><path d="M12 12l5-2v4l-5 2z" fill="#3f8fe0"/></svg>
<svg style="left:106px;top:1051px" width="22" height="20" viewBox="0 0 22 20"><rect x="3" y="1" width="18" height="13" fill="#e9eef3" stroke="#9aa3ab"/><path d="M5 9l3-3 3 3 3-4 3 3 3-2" fill="none" stroke="#2f7fd0" stroke-width="1.400"/><path d="M8 19h8l-2-5h-4z" fill="#c9cfd5"/><rect x="0" y="5" width="4" height="12" fill="#b8bec4"/></svg>
<svg style="left:153px;top:1049px" width="20" height="24" viewBox="0 0 20 24"><circle cx="10.300" cy="9.700" r="6" fill="none" stroke="#d9431c" stroke-width="3" stroke-dasharray="30.400 7.300" transform="rotate(170 10.300 9.700)"/><path d="M9.200 2.500h4.300L12.600 17H10z" fill="#c9cdd2"/><path d="M11.300 3v13" stroke="#8d9399" stroke-width=".8"/><circle cx="5.300" cy="16.400" r="2.200" fill="none" stroke="#2f8ee6" stroke-width="1.900"/><circle cx="11.600" cy="19.600" r="2.300" fill="none" stroke="#2f8ee6" stroke-width="1.900"/><path d="M7 15l3.500-3M11.500 17.500v-3" stroke="#2f8ee6" stroke-width="1.600"/></svg>
<svg style="left:196px;top:1050px" width="22" height="22" viewBox="0 0 22 22"><circle cx="11" cy="11" r="10.500" fill="#2a68d8"/><path d="M3 6q6-6 14-2 4 3 4 8-3-4-8-4-5 0-10-2z" fill="#6fb4ff"/><path d="M5 9l12 1v8H5z" fill="#f4f6fb"/><path d="M5 9l6 5 6-4" fill="none" stroke="#b9c2d6" stroke-width="1"/></svg>
<span class="t" style="left:221.00px;top:1054.00px;font:normal 400 16.00px/1 'Liberation Sans', sans-serif;color:#fff;letter-spacing:-0.769px;">Posteingang - 2002An...</span>
<div class="a" style="left:192px;top:1077px;width:190px;height:3px;background:#8fa9ba"></div>
<svg style="left:400px;top:1050px" width="21" height="21" viewBox="0 0 21 21"><defs><linearGradient id="eg1" x1="0" y1="0" x2="1" y2=".6"><stop offset="0" stop-color="#2aa0e8"/><stop offset=".55" stop-color="#38c6b0"/><stop offset="1" stop-color="#6fdc6a"/></linearGradient></defs><circle cx="10.500" cy="10.500" r="10.300" fill="#1668c4"/><path d="M.5 11Q1 2 10.500.3q8.500.4 10 8.200.3 4-3.500 5-3 .3-3-1.500 1.500-1.800 0-4Q11.500 5 7.500 6 2 7.500.5 11z" fill="url(#eg1)"/><path d="M7 12q.5-3.500 4.500-3.200-2 1.700-1.200 4.200 1.200 3.300 5.500 3.300 1.800-.2 3-1-1.800 4-6 4.300Q8 19 7 12z" fill="#0d4ea0"/><path d="M.5 11q.5 7 7 9.500-3-3.500-1.800-8 1-3.500 5-4.500-6-1.500-10.200 3z" fill="#1f86dc"/></svg>
<svg style="left:447px;top:1053px" width="19" height="16" viewBox="0 0 19 16"><path d="M0 1h6.500l1.500 1.800H19V16H0z" fill="#f3a91d"/><path d="M0 4.500h19V16H0z" fill="#fdd766"/><path d="M3.500 9.500h12V16h-12z" fill="#3c8fe2"/><path d="M6 12h7v4H6z" fill="#fdd766"/></svg>
<svg style="left:492px;top:1050px" width="19" height="22" viewBox="0 0 19 22"><defs><linearGradient id="ng1" x1="0" y1="0" x2="0" y2="1"><stop offset="0" stop-color="#fff"/><stop offset=".35" stop-color="#f2f7ea"/><stop offset=".6" stop-color="#8fd05a"/><stop offset="1" stop-color="#3fa92f"/></linearGradient></defs><path d="M1 1h11l3.500 3.500V21H1z" fill="url(#ng1)" stroke="#cfd4cc" stroke-width=".8"/><path d="M4.500 6v6.500M7.500 8v3M10 8.500v2" stroke="#1d1d1d" stroke-width="1.600"/><path d="M16.500.8l2 1.700-6.700 11.500-2.600 1.300.5-3z" fill="#f2b21c" stroke="#b8741a" stroke-width=".5"/><path d="M16.500.8l2 1.700.6-1.100-1.800-1.400z" fill="#d83a3a"/></svg>
<div class="a" style="left:538px;top:1051px;width:20px;height:20px;background:linear-gradient(160deg,#f2b65a,#d98a1a);border:1px solid #f3d9a8;border-radius:2px"></div>
<svg style="left:541px;top:1054px" width="14" height="14" viewBox="0 0 14 14" fill="none" stroke="#fff" stroke-width="1.500"><circle cx="9.300" cy="4.700" r="3.200"/><circle cx="10" cy="4" r=".8" fill="#fff" stroke="none"/><path d="M7 7L1.500 12.500M3.500 10.500l1.800 1.800M5.500 8.800l1.500 1.500"/></svg>
<div class="a" style="left:584px;top:1051px;width:20px;height:20px;background:#1fb61f;border-radius:50%"></div>
<svg style="left:589px;top:1057px" width="10" height="8" viewBox="0 0 10 8" fill="none" stroke="#fff" stroke-width="1.800"><path d="M1 4l3 3 5-6"/></svg>
<svg style="left:630px;top:1050px" width="17" height="22" viewBox="0 0 17 22"><path d="M4 2.500l9-1.200q1.200 0 1.300 1.200l.8 14q0 1.200-1.200 1.500l-8.500 2q-1.200.2-1.500-1L1.500 4.500Q1.400 3 4 2.500z" fill="#e9e9ea" stroke="#b9b9bc" stroke-width=".7"/><path d="M8 6.500q2.800 2 2.600 4-.3 1.400-1.800 1.100l.5 1.700H6.800l.6-1.700q-1.600.3-1.900-1.100-.2-2 2.500-4z" fill="#3a3a3e"/><path d="M3 4l2-.3M12 16.500l1.800-.4" stroke="#d04848" stroke-width="1.200"/></svg>
<svg style="left:675px;top:1051px" width="21" height="20" viewBox="0 0 21 20"><defs><linearGradient id="pg1" x1=".2" y1="1" x2=".8" y2="0"><stop offset="0" stop-color="#3f9bb8"/><stop offset=".5" stop-color="#86c7da"/><stop offset="1" stop-color="#d4eef5"/></linearGradient></defs><path d="M8 1.200l9.500 2.600 2 12.200-4.500 3z" fill="#c79a4a"/><path d="M8 1.200l9.500 2.600L15 19 1.300 14.500z" fill="url(#pg1)"/><path d="M8 1.200l9.500 2.600-.8 3L6.600 4z" fill="#e4f4f8" opacity=".8"/></svg>
<div class="a" style="left:722px;top:1051px;width:20px;height:20px;background:#c6c6c6;border:2px solid;border-color:#e6e6e6 #7a7a7a #6a6a6a #dedede"></div>
<span class="t" style="left:726.00px;top:1052.00px;font:normal 700 19.00px/1 'Liberation Serif', serif;color:#f01010;">D</span>
<svg style="left:767px;top:1052px" width="22" height="20" viewBox="0 0 22 20"><rect x="1.500" y="1.500" width="19" height="11.500" fill="#e8305a"/><rect x="4" y="3" width="14" height="8.500" fill="#4a4a4c"/><path d="M4 3h14L4 11.500z" fill="#2c2c2e"/><path d="M6 13h10v2.500H6z" fill="#e8305a"/><path d="M3 16.500h16l2 2.500H1z" fill="#e8305a"/><path d="M4 17.700h14" stroke="#2a2e32" stroke-width=".7" stroke-dasharray="1.500 1"/></svg>
<svg style="left:814px;top:1051px" width="20" height="20" viewBox="0 0 20 20"><path d="M1.500 3.500l3.500-2 12.500 4q1.200.5 1.200 1.500v10.500q0 1-1.200.8L3 15.500q-1.500-.5-1.500-2z" fill="#cfd2d6" stroke="#f0f0f0" stroke-width=".6"/><path d="M1.500 3.500l3.500-2V15L3 15.500q-1.500-.5-1.500-2z" fill="#9a9ea4"/><circle cx="11" cy="11.500" r="4.600" fill="#8d9399" stroke="#eceff2" stroke-width="1"/><circle cx="11" cy="11.500" r="2.500" fill="#33383e"/><circle cx="10.200" cy="10.700" r=".9" fill="#4aa0c8"/><path d="M13 4.500l3.500 1.200v1.500L13 6z" fill="#8a8e52"/></svg>
<svg style="left:858px;top:1051px" width="20" height="20" viewBox="0 0 20 20"><path d="M.6 2.200L5.500 5.800 11 4.300 16.600.3 17.200 5.500 19.700 9.600 17.600 13.200 15.200 15.500 13.200 19.300H3.200L1.300 14 2.300 9z" fill="#f5690a"/><path d="M.6 2.200L3.600 9.200 1.500 8zM16.600.3L16.900 5.600 14.400 4.400z" fill="#fff"/><path d="M2 15.200q6-1.500 12.600-.4L13.200 19.600l-1.700-1.300-1.500 1.500-1.800-1.500-1.600 1.700-1.600-1.900L3.200 19.300z" fill="#fdfdfd"/><path d="M16 8.300L19.900 9.600 18 13.300 15.800 12.400z" fill="#fff"/><path d="M15.500 13q1.300.3 1.900 1l-1 1.800q-.9-.4-1.400-1.400z" fill="#2a150a"/><circle cx="14.700" cy="9.700" r="1" fill="#0c0c10"/><path d="M5.500 8.800q2-1.100 4.300.2M6.500 11q1.500.8 3.300.4" fill="none" stroke="#a84606" stroke-width=".8"/></svg>
<span class="t" style="left:882.00px;top:1054.00px;font:normal 400 16.00px/1 'Liberation Sans', sans-serif;color:#fff;letter-spacing:-0.603px;">Einträge im Tab Konte...</span>
<div class="a" style="left:853px;top:1077px;width:191px;height:3px;background:#8fa9ba"></div>
<svg style="left:1057px;top:1051px" width="20" height="20" viewBox="0 0 20 20"><path d="M.6 2.200L5.500 5.800 11 4.300 16.600.3 17.200 5.500 19.700 9.600 17.600 13.200 15.200 15.500 13.200 19.300H3.200L1.300 14 2.300 9z" fill="#f5690a"/><path d="M.6 2.200L3.600 9.200 1.500 8zM16.600.3L16.900 5.600 14.400 4.400z" fill="#fff"/><path d="M2 15.200q6-1.500 12.600-.4L13.200 19.600l-1.700-1.300-1.500 1.500-1.800-1.500-1.600 1.700-1.600-1.900L3.200 19.300z" fill="#fdfdfd"/><path d="M16 8.300L19.900 9.600 18 13.300 15.800 12.400z" fill="#fff"/><path d="M15.500 13q1.300.3 1.900 1l-1 1.800q-.9-.4-1.400-1.400z" fill="#2a150a"/><circle cx="14.700" cy="9.700" r="1" fill="#0c0c10"/><path d="M5.500 8.800q2-1.100 4.300.2M6.500 11q1.500.8 3.300.4" fill="none" stroke="#a84606" stroke-width=".8"/></svg>
<span class="t" style="left:1082.00px;top:1054.00px;font:normal 400 16.00px/1 'Liberation Sans', sans-serif;color:#fff;letter-spacing:-0.603px;">Einträge im Tab Konte...</span>
<div class="a" style="left:1053px;top:1077px;width:191px;height:3px;background:#8fa9ba"></div>
<div class="a" style="left:1248px;top:1042px;width:200px;height:38px;background:#3c4146"></div>
<div class="a" style="left:1248px;top:1077px;width:200px;height:3px;background:#9ab6c8"></div>
<svg style="left:1258.0px;top:1051.0px" width="20" height="20" viewBox="0 0 21 21"><defs><linearGradient id="fg2" x1=".820" y1=".080" x2=".250" y2=".950"><stop offset="0" stop-color="#fff44f"/><stop offset=".300" stop-color="#ffb11f"/><stop offset=".550" stop-color="#ff6a2a"/><stop offset=".800" stop-color="#ff3150"/><stop offset="1" stop-color="#e31587"/></linearGradient></defs><path d="M12.800.3q.8 2.600 3.300 4.200.9-1 .7-2.400 4.200 3.600 3.900 9a10.200 9.700 0 0 1-20.400.4q0-3.500 2-6-.2 1.500.5 2.600Q4.300 5 7.300 4.200q-.8 1.100-.5 2.400 2.500-1 4.500-.2Q9.800 3.600 12.800.3z" fill="url(#fg2)"/><circle cx="10" cy="11.400" r="4.300" fill="#7a45e8"/><path d="M12 8.500q2.300 1.800 1.800 4.800-.8 2.400-3.300 2.500 3.500.8 5-2.600.8-3-3.500-4.700z" fill="#b13ad8" opacity=".7"/><path d="M4.800 9.800q2.400-2.900 5.700-1.700 1.900.9 2.300 2.600-2-1.200-4.100-.8-1.400.4-1.100 1.600-1.700.3-2.800-1.700z" fill="#ffa01f"/></svg>
<span class="t" style="left:1282.00px;top:1054.00px;font:normal 400 16.00px/1 'Liberation Sans', sans-serif;color:#fff;letter-spacing:-0.742px;">Entwicklerwerkzeuge ...</span>
<svg style="left:1671px;top:1056px" width="17" height="10" viewBox="0 0 17 10" fill="none" stroke="#fff" stroke-width="1.500"><path d="M1 9l7.500-7.500L16 9"/></svg>
<svg style="left:1698px;top:1052px" width="23" height="17" viewBox="0 0 23 17" fill="none" stroke="#fff" stroke-width="1.300"><rect x="5" y="5" width="16" height="9"/><rect x="7" y="7" width="12" height="5" fill="#fff"/><path d="M21 8h1.500v3H21M3 1v4M1 3h4M3 5v6h2"/></svg>
<svg style="left:1729px;top:1052px" width="22" height="18" viewBox="0 0 22 18" fill="none" stroke="#fff" stroke-width="1.300"><rect x="5" y="1" width="16" height="11"/><path d="M13 12v4M8 16.500h10"/><rect x="1" y="3" width="4" height="5" fill="#2a2e32"/><path d="M3 8v3"/></svg>
<svg style="left:1758px;top:1052px" width="22" height="17" viewBox="0 0 22 17" fill="none" stroke="#fff" stroke-width="1.300"><path d="M1 6h3l4-4v13l-4-4H1z"/><path d="M11 6q1.500 2.500 0 5"/><path d="M14 4q3 4.500 0 9M17 2q4.500 6.500 0 13" stroke="#8a8f94"/></svg>
<span class="t" style="left:1792.40px;top:1054.00px;font:normal 400 16.00px/1 'Liberation Sans', sans-serif;color:#fff;letter-spacing:-1.060px;">14:37:59</span>
<svg style="left:1868px;top:1051px" width="22" height="21" viewBox="0 0 22 21" fill="none" stroke="#fff" stroke-width="1.300"><path d="M1 1h20v15h-7l-3 3.500-3-3.500H1z"/></svg>
<div class="a" style="left:1914px;top:1042px;width:1px;height:38px;background:#8a8f94"></div>
</body></html>
